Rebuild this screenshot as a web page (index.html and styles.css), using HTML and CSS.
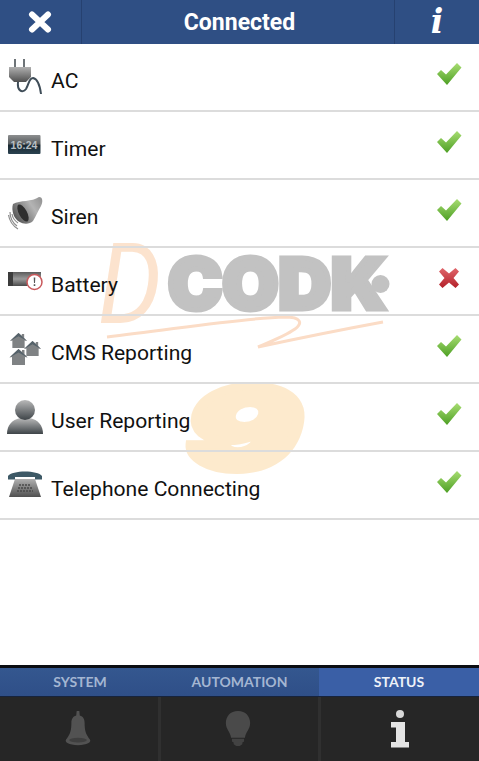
FILE: index.html
```html
<!DOCTYPE html>
<html lang="en">
<head>
<meta charset="utf-8">
<title>Connected</title>
<link rel="stylesheet" href="styles.css">
</head>
<body>
<svg width="0" height="0" class="defs">
  <defs>
    <linearGradient id="gCheck" x1="0" y1="0" x2="0" y2="1"><stop offset="0" stop-color="#a8dd72"/><stop offset="1" stop-color="#4d9f24"/></linearGradient>
    <linearGradient id="gCross" x1="0" y1="0" x2="0" y2="1"><stop offset="0" stop-color="#e0666b"/><stop offset="1" stop-color="#b32029"/></linearGradient>
    <linearGradient id="gMetal" x1="0" y1="0" x2="0" y2="1"><stop offset="0" stop-color="#b0b0b0"/><stop offset="1" stop-color="#505050"/></linearGradient>
    <linearGradient id="gUser" x1="0" y1="0" x2="0" y2="1"><stop offset="0" stop-color="#b9b9b9"/><stop offset="1" stop-color="#3e4448"/></linearGradient>
    <linearGradient id="gTimer" x1="0" y1="0" x2="0" y2="1"><stop offset="0" stop-color="#8d8f90"/><stop offset=".45" stop-color="#5a5e60"/><stop offset=".55" stop-color="#1b2932"/><stop offset="1" stop-color="#2a4250"/></linearGradient>
    <linearGradient id="gBatt" x1="0" y1="0" x2="0" y2="1"><stop offset="0" stop-color="#5c5c5c"/><stop offset=".5" stop-color="#9a9a9a"/><stop offset="1" stop-color="#4a4a4a"/></linearGradient>
    <linearGradient id="gHorn" x1="1" y1="0" x2="0" y2="0.6"><stop offset="0" stop-color="#8f8f8f"/><stop offset=".4" stop-color="#b4b4b4"/><stop offset="1" stop-color="#5a5a5a"/></linearGradient>
    <symbol id="check" viewBox="0 0 34 66">
      <path d="M8 30 12 26 17 30.500 28 19 32.500 23.500 18 41Z" fill="url(#gCheck)"/>
    </symbol>
    <symbol id="cross" viewBox="0 0 34 66">
      <path d="M10 23.500 13.500 20 20 25.500 26.500 20 30 23.500 24.500 30 30 36.500 26.500 40 20 34.500 13.500 40 10 36.500 15.500 30Z" fill="url(#gCross)"/>
    </symbol>
    <symbol id="house" viewBox="0 0 20 18">
      <path d="M1 9.500 10 1 13.500 4V2H16V6.300L19 9.500 16.500 9V17H3.500V9Z" fill="#7f8284"/>
      <path d="M1 9.500 10 1 19 9.500 10 4.500Z" fill="#55626a"/>
    </symbol>
  </defs>
</svg>

<div class="screen">
  <header class="topbar">
    <div class="top-btn top-close">
      <svg class="close-icon" width="24" height="22" viewBox="0 0 24 22"><path d="M4 3.500 20 18.500M20 3.500 4 18.500" stroke="#fff" stroke-width="6" stroke-linecap="round"/></svg>
    </div>
    <h1 class="top-title">Connected</h1>
    <div class="top-btn top-info">i</div>
  </header>

  <main class="content">
    <svg class="watermark" width="479" height="621" viewBox="0 44 479 621">
      <text class="wm-d" x="98" y="323" textLength="64" lengthAdjust="spacingAndGlyphs">D</text>
      <path d="M107 337C170 330 240 318 285 317 301 317 303 323 295 329 285 336 265 344 258 347 300 338 345 329 383 322" fill="none" stroke="#fbdcc6" stroke-width="3"/>
      <text class="wm-cod" x="168" y="308.500" textLength="218" lengthAdjust="spacingAndGlyphs">CODK</text>
      <circle cx="380.500" cy="284" r="9" fill="#c2c2c2"/>
      <text class="wm-nine" x="186" y="469" textLength="114" lengthAdjust="spacingAndGlyphs">9</text>
    </svg>

    <ul class="status-list">
      <li class="row">
        <svg class="row-icon" width="51" height="66" viewBox="0 0 51 66">
          <path d="M14 15h2v9h-2zM23 15h2v9h-2z" fill="#6e7478"/>
          <path d="M9 23H31V33L26 38H14L9 33Z" fill="url(#gMetal)"/>
          <path d="M18 38C17 46 22 50 26 45 29 40 29 34 33 34 38 35 40 42 41 50" fill="none" stroke="#3f4d58" stroke-width="2"/>
        </svg>
        <span class="row-label">AC</span>
        <svg class="row-state" width="34" height="66"><use href="#check" width="34" height="66"/></svg>
      </li>
      <li class="row">
        <svg class="row-icon" width="51" height="66" viewBox="0 0 51 66">
          <rect x="8" y="23" width="32.500" height="19" rx="1" fill="url(#gTimer)"/>
          <text class="timer-digits" x="24" y="36.500">16:24</text>
        </svg>
        <span class="row-label">Timer</span>
        <svg class="row-state" width="34" height="66"><use href="#check" width="34" height="66"/></svg>
      </li>
      <li class="row">
        <svg class="row-icon" width="51" height="66" viewBox="0 0 51 66">
          <path d="M13 24C20 20 32 22 39 17 43 17 43 22 41 26 38 31 36 36 33 41 28 46 18 44 14 36 12 31 12 27 13 24Z" fill="url(#gHorn)"/>
          <ellipse cx="23" cy="33" rx="4" ry="9.500" transform="rotate(-28 23 33)" fill="#2e2e2e"/>
          <path d="M10 32C10 38 13 43 17 46M8.500 35C9.500 41 13 46 18 49M12 34C12.500 37 15 41 18 43" fill="none" stroke="#8d8d8d" stroke-width="1.200"/>
        </svg>
        <span class="row-label">Siren</span>
        <svg class="row-state" width="34" height="66"><use href="#check" width="34" height="66"/></svg>
      </li>
      <li class="row">
        <svg class="row-icon" width="51" height="66" viewBox="0 0 51 66">
          <rect x="8" y="24" width="33" height="14" fill="url(#gBatt)"/>
          <rect x="8" y="24" width="5" height="14" fill="#3c3c3c"/>
          <circle cx="34.500" cy="34" r="7.500" fill="#fff" stroke="#c9595c" stroke-width="1.500"/>
          <path d="M33.700 29.500h1.600l-.3 5.500h-1zM33.700 36.300h1.600v1.700h-1.600z" fill="#555"/>
        </svg>
        <span class="row-label">Battery</span>
        <svg class="row-state" width="34" height="66"><use href="#cross" width="34" height="66"/></svg>
      </li>
      <li class="row">
        <svg class="row-icon" width="51" height="66" viewBox="0 0 51 66">
          <use href="#house" x="9" y="16" width="19" height="17"/>
          <use href="#house" x="23" y="24" width="19" height="17"/>
          <use href="#house" x="8" y="32" width="21" height="18"/>
        </svg>
        <span class="row-label">CMS Reporting</span>
        <svg class="row-state" width="34" height="66"><use href="#check" width="34" height="66"/></svg>
      </li>
      <li class="row">
        <svg class="row-icon" width="51" height="66" viewBox="0 0 51 66">
          <path d="M7 50C7 41 12 36 20 34H30C38 36 43 41 43 50Z" fill="url(#gUser)"/>
          <circle cx="25" cy="26" r="10" fill="url(#gUser)"/>
        </svg>
        <span class="row-label">User Reporting</span>
        <svg class="row-state" width="34" height="66"><use href="#check" width="34" height="66"/></svg>
      </li>
      <li class="row">
        <svg class="row-icon" width="51" height="66" viewBox="0 0 51 66">
          <path d="M15 27H35L41 45H9Z" fill="url(#gMetal)"/>
          <path d="M19 33H31M18 36H32M17 39H33" stroke="#4a4a4a" stroke-width="1.300" stroke-dasharray="2 1"/>
          <path d="M8 24C12 18 38 18 42 24V27.500H35V25H15V27.500H8Z" fill="#3d5966"/>
        </svg>
        <span class="row-label">Telephone Connecting</span>
        <svg class="row-state" width="34" height="66"><use href="#check" width="34" height="66"/></svg>
      </li>
    </ul>
  </main>

  <footer class="bottom">
    <nav class="tabs">
      <div class="tab">SYSTEM</div>
      <div class="tab">AUTOMATION</div>
      <div class="tab tab-active">STATUS</div>
    </nav>
    <div class="icon-bar">
      <div class="icon-cell">
        <svg width="30" height="37" viewBox="0 0 34 40" preserveAspectRatio="none"><path d="M15.500 1h3l.5 5c4 1 5.500 4 5.500 8 0 7 1 12 6 18 2 3-3 6-13.500 6S1.500 35 3.500 32c5-6 6-11 6-18 0-4 1.500-7 5.500-8Z" fill="#525252"/><ellipse cx="17" cy="32.500" rx="10" ry="2.500" fill="#3f3f3f"/></svg>
      </div>
      <div class="icon-cell">
        <svg width="26" height="37" viewBox="0 0 30 40" preserveAspectRatio="none"><path d="M15 1C6 1 1 7 1 14c0 7 5 9 6 16h16c1-7 6-9 6-16C29 7 24 1 15 1Z" fill="#4a4a4a"/><path d="M8 31h14v3l-2 1v2l-3 2h-4l-3-2v-2l-2-1Z" fill="#424242"/></svg>
      </div>
      <div class="icon-cell">
        <svg width="20" height="40" viewBox="0 0 20 40"><circle cx="10" cy="5" r="4" fill="#d8d8d8"/><path d="M1 13H15V33H19V38.500H1V33H6V18.500H1Z" fill="#e4e4e4"/></svg>
      </div>
    </div>
  </footer>
</div>
</body>
</html>
```
FILE: styles.css
```css
* {
  box-sizing: border-box;
}

html,
body {
  margin: 0;
  padding: 0;
  background: #fff;
}

.defs {
  position: absolute;
}

.screen {
  width: 479px;
  height: 761px;
  display: flex;
  flex-direction: column;
  overflow: hidden;
  font-family: Roboto, "Liberation Sans", sans-serif;
}

/* Top bar */
.topbar {
  flex: 0 0 44px;
  height: 44px;
  display: flex;
  background: #2f4f84;
  color: #fff;
}

.top-btn {
  display: flex;
  align-items: center;
  justify-content: center;
}

.top-close {
  flex: 0 0 82px;
  padding-right: 2px;
  border-right: 1px solid #264170;
}

.top-title {
  flex: 1;
  margin: 0;
  padding: 1px 0 0 3px;
  text-align: center;
  font-size: 23px;
  font-weight: 700;
  line-height: 43px;
}

.top-info {
  flex: 0 0 85px;
  border-left: 1px solid #264170;
  font-family: "DejaVu Serif", serif;
  font-style: italic;
  font-weight: 700;
  font-size: 33px;
  line-height: 44px;
}

/* Status list */
.content {
  flex: 1;
  position: relative;
  background: #fff;
}

.watermark {
  position: absolute;
  top: 0;
  left: 0;
}

.wm-d {
  font-family: Roboto, sans-serif;
  font-style: italic;
  font-weight: 400;
  font-size: 112px;
  fill: #fce3ce;
}

.wm-cod {
  font-family: Inter, "Liberation Sans", sans-serif;
  font-weight: 900;
  font-size: 70px;
  fill: #c2c2c2;
  stroke: #c2c2c2;
  stroke-width: 5px;
}

.wm-nine {
  font-family: Inter, "Liberation Sans", sans-serif;
  font-weight: 900;
  font-style: italic;
  font-size: 112px;
  fill: #fdeacd;
  stroke: #fdeacd;
  stroke-width: 8px;
}

.status-list {
  position: relative;
  z-index: 1;
  list-style: none;
  margin: 0;
  padding: 0;
}

.row {
  height: 68px;
  display: flex;
  border-bottom: 2px solid #dcdcdc;
}

.row-icon {
  flex: 0 0 51px;
  display: block;
}

.row-label {
  flex: 1;
  font-size: 21.100px;
  line-height: 26px;
  padding-top: 24px;
  color: #111;
}

.row-state {
  flex: 0 0 34px;
  display: block;
  margin-right: 16px;
}

.timer-digits {
  font-family: "Liberation Sans", sans-serif;
  font-size: 10.500px;
  font-weight: 700;
  text-anchor: middle;
  fill: #b8c0c4;
}

/* Bottom navigation */
.bottom {
  flex: 0 0 96px;
  display: flex;
  flex-direction: column;
  background: #262626;
  border-top: 3px solid #0b0d12;
}

.tabs {
  flex: 0 0 28px;
  display: grid;
  grid-template-columns: 160px 159px 160px;
  background: linear-gradient(#34578f, #2f4f88);
  border-bottom: 1px solid #16233d;
}

.tab {
  text-align: center;
  font-family: Lato, "Open Sans", sans-serif;
  font-size: 14px;
  font-weight: 700;
  line-height: 28px;
  color: #a4b6d2;
}

.tab-active {
  background: #3a5fa6;
  color: #eef2f8;
}

.icon-bar {
  flex: 1;
  display: grid;
  grid-template-columns: 161px 160px 158px;
}

.icon-cell {
  display: flex;
  justify-content: center;
  padding-top: 13px;
  padding-right: 3px;
  border-right: 3px solid #303030;
}

.icon-cell:last-child {
  padding-right: 0;
  padding-top: 12px;
  border-right: 0;
}
```
